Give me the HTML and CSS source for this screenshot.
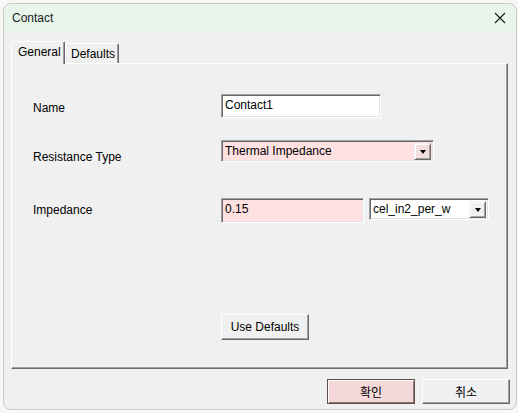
FILE: index.html
```html
<!DOCTYPE html>
<html>
<head>
<meta charset="utf-8">
<link rel="stylesheet" href="styles.css">
</head>
<body>
<div class="window">
  <div class="titlebar">
    <span class="title">Contact</span>
    <svg class="close" width="12" height="12" viewBox="0 0 12 12"><path d="M1 1L11 11M11 1L1 11" stroke="#1a1a1a" stroke-width="1.1" fill="none"/></svg>
  </div>
  <div class="client">
    <div class="tabs">
      <div class="tab active">General</div>
      <div class="tab">Defaults</div>
    </div>
    <div class="panel">
      <div class="row row-name">
        <span class="label label-name">Name</span>
        <div class="edit edit-name">Contact1</div>
      </div>
      <div class="row row-type">
        <span class="label label-low">Resistance Type</span>
        <div class="combo combo-pink combo-type"><span class="combo-text">Thermal Impedance</span><span class="drop"><i class="tri"></i></span></div>
      </div>
      <div class="row row-imp">
        <span class="label label-imp">Impedance</span>
        <div class="edit edit-pink edit-imp">0.15</div>
        <div class="combo combo-unit"><span class="combo-text">cel_in2_per_w</span><span class="drop"><i class="tri"></i></span></div>
      </div>
      <div class="row row-btn">
        <button class="btn btn-defaults">Use Defaults</button>
      </div>
    </div>
    <div class="footer">
      <button class="btn btn-ok">확인</button>
      <button class="btn btn-cancel">취소</button>
    </div>
  </div>
</div>
</body>
</html>
```
FILE: styles.css
```css
* { box-sizing: border-box; }
html, body { margin: 0; padding: 0; }
body {
  width: 518px;
  height: 413px;
  background: #f7f7f7;
  font-family: "Liberation Sans", Arial, "Noto Sans CJK KR", sans-serif;
  font-size: 12px;
  color: #000;
  padding: 3px 0 0 3px;
}
.window {
  width: 514px;
  height: 407px;
  border: 1px solid #c9c9c9;
  border-radius: 8px;
  background: #f0f0f0;
  overflow: hidden;
  display: flex;
  flex-direction: column;
}
.titlebar {
  height: 29px;
  flex: none;
  background: #e7f5eb;
  display: flex;
  align-items: center;
  padding: 0 10px 1px 8px;
}
.title {
  flex: 1;
  font-size: 12px;
  color: #1a1a1a;
  line-height: 14px;
}
.close { display: block; margin-right: 0px; }
.client {
  flex: 1;
  padding: 8px 0 0 7px;
  display: flex;
  flex-direction: column;
}
.tabs {
  display: flex;
  align-items: flex-end;
  height: 22px;
  position: relative;
  z-index: 1;
}
.tab {
  height: 20px;
  width: 54px;
  border: 1px solid #fff;
  border-right: 1px solid #696969;
  border-bottom: none;
  box-shadow: inset -1px 0 #a0a0a0;
  border-radius: 2px 2px 0 0;
  background: #f0f0f0;
  line-height: 20px;
  padding-left: 5px;
  color: #000;
}
.tab.active {
  height: 23px;
  margin-bottom: -1px;
  padding-left: 6px;
  line-height: 20px;
  width: 54px;
}
.panel {
  width: 497px;
  height: 306px;
  border: 1px solid;
  border-color: #fff #696969 #696969 #fff;
  box-shadow: inset -1px -1px #a0a0a0;
  display: flex;
  flex-direction: column;
  padding-left: 21px;
}
.row {
  display: flex;
  align-items: center;
}
.label {
  width: 188px;
  flex: none;
  line-height: 14px;
}
.label-name { padding-top: 3px; }
.label-low { padding-top: 12px; }
.label-imp { padding-bottom: 2px; }
.row-name { margin-top: 30px; height: 24px; }
.row-type { margin-top: 22px; height: 22px; }
.row-imp { margin-top: 36px; height: 25px; }
.row-btn { margin-top: 91px; height: 26px; padding-left: 188px; }

.edit {
  height: 100%;
  border: 1px solid;
  border-color: #a0a0a0 #fff #fff #a0a0a0;
  box-shadow: inset 1px 1px #696969, inset -1px -1px #e3e3e3;
  background: #fff;
  padding: 3px 0 0 3px;
  line-height: 14px;
  color: #000;
}
.edit-name { width: 160px; }
.edit-pink { background: #ffe1e1; }
.edit-imp { width: 143px; }

.combo {
  height: 22px;
  display: flex;
  align-items: center;
  border: 1px solid;
  border-color: #a0a0a0 #fff #fff #a0a0a0;
  box-shadow: inset 1px 1px #696969, inset -1px -1px #e3e3e3;
  background: #fff;
  padding: 2px 2px 2px 3px;
}
.combo-pink { background: #ffe1e1; }
.combo-type { width: 213px; }
.combo-unit { width: 120px; margin-left: 5px; align-self: flex-start; }
.combo-text { flex: 1; line-height: 14px; white-space: nowrap; overflow: hidden; }
.drop {
  width: 17px;
  height: 17px;
  flex: none;
  background: #f0f0f0;
  border: 1px solid;
  border-color: #f0f0f0 #696969 #696969 #f0f0f0;
  box-shadow: inset 1px 1px #fff, inset -1px -1px #a0a0a0;
  display: flex;
  align-items: center;
  justify-content: center;
}
.combo-pink .drop { background: #f3dede; }
.tri {
  width: 0;
  height: 0;
  border-left: 3.5px solid transparent;
  border-right: 3.5px solid transparent;
  border-top: 4px solid #000;
  margin-top: 1px;
}

.btn {
  font-family: "Liberation Sans", Arial, "Noto Sans CJK KR", sans-serif;
  font-size: 12px;
  color: #000;
  height: 26px;
  width: 88px;
  padding: 0;
  margin: 0;
  background: #f0f0f0;
  border: 1px solid;
  border-color: #fff #696969 #696969 #fff;
  box-shadow: inset -1px -1px #a0a0a0;
  line-height: 14px;
}
.footer {
  display: flex;
  justify-content: flex-end;
  gap: 7px;
  padding: 10px 6px 0 0;
}
.btn-ok, .btn-cancel { height: 25px; font-family: "Noto Sans CJK KR", sans-serif; }
.btn-ok {
  background: #f3d7d9;
  border: 1px solid #5f4f50;
  box-shadow: inset 1px 1px #fff, inset -1px -1px #8a7474;
}
```
